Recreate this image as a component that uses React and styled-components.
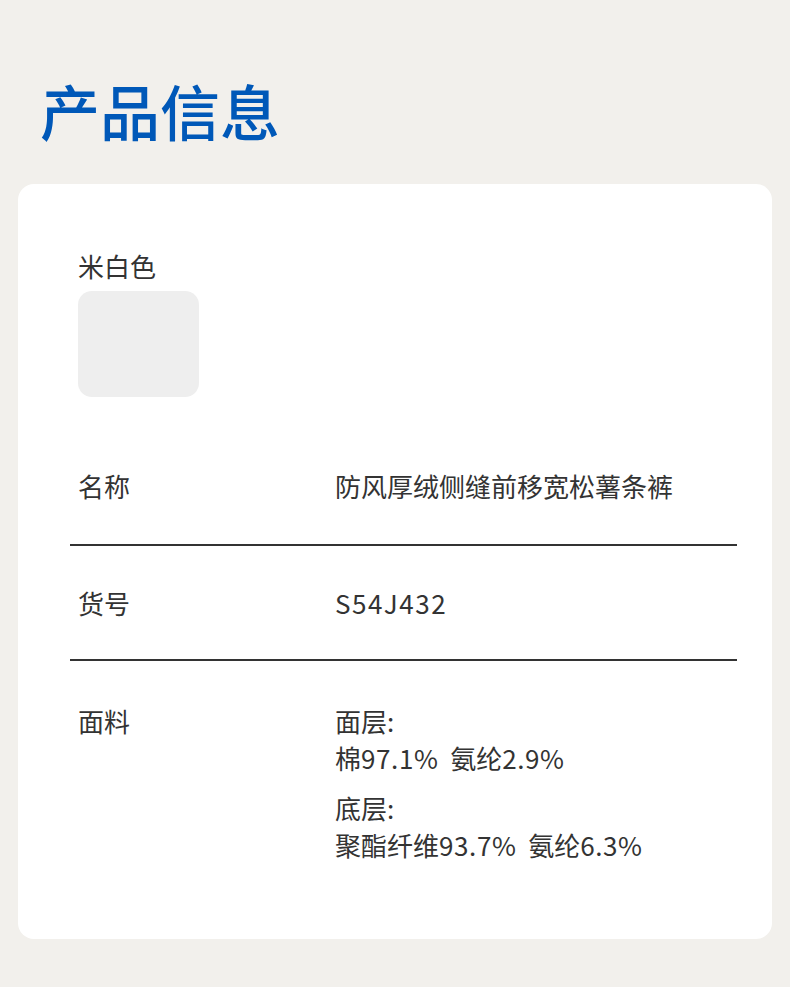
import React from "react";
import styled, { createGlobalStyle } from "styled-components";

const GlobalStyle = createGlobalStyle`
  body {
    margin: 0;
    background: #f2f0ec;
    font-family: "Noto Sans CJK SC", "Noto Sans", sans-serif;
    color: #333333;
  }
`;

const Page = styled.div`
  padding: 80px 18px 47px;
`;

const Title = styled.h1`
  margin: 0 0 44px 22px;
  font-size: 60px;
  line-height: 60px;
  font-weight: 500;
  color: #0058b8;
`;

const Card = styled.div`
  background: #ffffff;
  border-radius: 16px;
  padding: 67px 35px 76px 52px;
`;

const ColorName = styled.div`
  padding-left: 8px;
  font-size: 26px;
  line-height: 30px;
`;

const Swatch = styled.div`
  margin: 10px 0 30px 8px;
  width: 121px;
  height: 106px;
  border-radius: 14px;
  background: #eeeeee;
`;

const Row = styled.div`
  display: grid;
  grid-template-columns: 265px 1fr;
  padding: ${(p) => p.$top}px 0 ${(p) => p.$bottom}px;
  border-bottom: ${(p) => (p.$last ? "none" : "2px solid #333333")};
  font-size: 26px;
  line-height: 37px;
`;

const Label = styled.div`
  padding-left: 8px;
`;

const Value = styled.div`
  display: flex;
  flex-direction: column;
  gap: 13px;
`;

const Group = styled.div``;

const Latin = styled.span`
  letter-spacing: ${(p) => (p.$tight ? "0.6px" : "1.5px")};
`;

// split a line so the Latin runs get their wider spacing
const renderLine = (text) =>
  text.split(/([A-Za-z0-9.%]+)/).map((part, i) =>
    /[A-Za-z0-9.%]/.test(part) ? (
      <Latin key={i} $tight={part.includes("%")}>
        {part}
      </Latin>
    ) : (
      part
    )
  );

const rows = [
  { label: "名称", top: 40, bottom: 40, value: [["防风厚绒侧缝前移宽松薯条裤"]] },
  { label: "货号", top: 38, bottom: 38, value: [["S54J432"]] },
  {
    label: "面料",
    top: 41,
    bottom: 0,
    last: true,
    value: [
      ["面层:", "棉97.1%\u00a0\u00a0氨纶2.9%"],
      ["底层:", "聚酯纤维93.7%\u00a0\u00a0氨纶6.3%"],
    ],
  },
];

export default function App() {
  return (
    <>
      <GlobalStyle />
      <Page>
        <Title>产品信息</Title>
        <Card>
          <ColorName>米白色</ColorName>
          <Swatch />
          {rows.map((r) => (
            <Row key={r.label} $top={r.top} $bottom={r.bottom} $last={r.last}>
              <Label>{r.label}</Label>
              <Value>
                {r.value.map((g, i) => (
                  <Group key={i}>
                    {g.map((line) => (
                      <div key={line}>{renderLine(line)}</div>
                    ))}
                  </Group>
                ))}
              </Value>
            </Row>
          ))}
        </Card>
      </Page>
    </>
  );
}
